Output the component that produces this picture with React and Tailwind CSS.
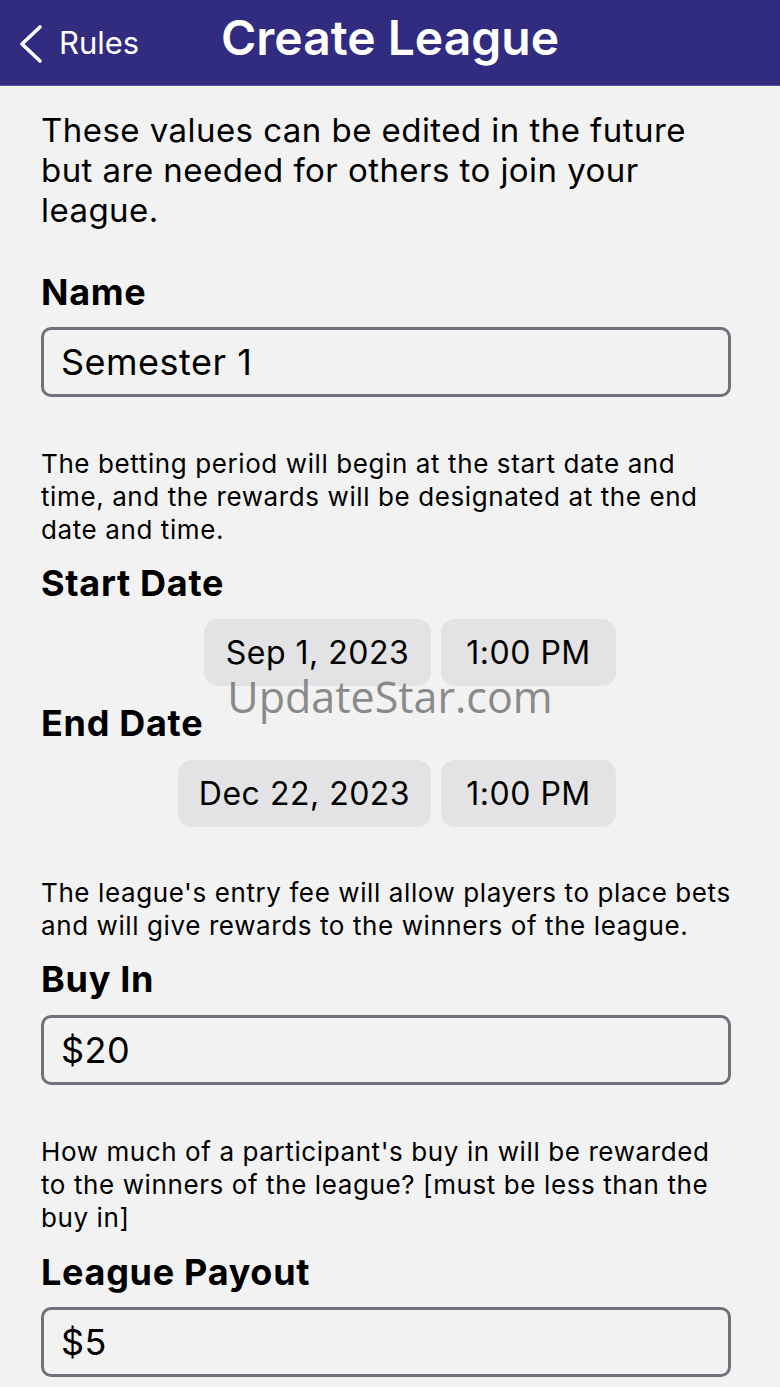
import React from "react";

const font = { fontFamily: "Inter, 'Noto Sans', sans-serif" };

function Heading({ children, className = "" }) {
  return (
    <div className={"text-[36px] leading-[40px] font-bold tracking-[0.7px] text-black " + className}>
      {children}
    </div>
  );
}

function Small({ children, className = "" }) {
  return (
    <p className={"text-[26px] leading-[33px] text-black tracking-[0.6px] " + className}>{children}</p>
  );
}

function Field({ value, className = "" }) {
  return (
    <div className={"h-[70px] rounded-[10px] border-[3px] border-[#6f717d] flex items-center px-[17px] text-[36px] text-black tracking-[0.5px] " + className}>
      {value}
    </div>
  );
}

function Pill({ children, className = "" }) {
  return (
    <div className={"h-[67px] rounded-[14px] bg-[#e3e3e5] flex items-center justify-center text-[32px] text-black tracking-[0.5px] " + className}>
      {children}
    </div>
  );
}

export default function App() {
  return (
    <div style={font} className="w-[780px] h-[1387px] bg-[#f2f2f2] overflow-hidden relative">
      <header className="h-[86px] bg-[#312c80] border-b border-[#5a56a0] flex items-center relative">
        <div className="flex items-center pl-[18px] pt-[2px]">
          <svg width="26" height="40" viewBox="0 0 26 40" className="mr-[15px]">
            <path d="M22 3 L4 20 L22 37" fill="none" stroke="white" strokeWidth="3.6" strokeLinecap="round" strokeLinejoin="round" />
          </svg>
          <span className="text-white text-[31px] tracking-[0px]">Rules</span>
        </div>
        <div className="absolute left-0 right-0 top-0 h-[86px] flex items-center justify-center pointer-events-none">
          <span className="text-white text-[48px] font-semibold tracking-[0px] pb-[10px]">Create League</span>
        </div>
      </header>

      <div className="pl-[41px] pr-[49px] pt-[24px]">
        <p className="text-[33px] leading-[40px] text-black tracking-[0.45px]">
          These values can be edited in the future but are needed for others to join your league.
        </p>

        <Heading className="mt-[42px]">Name</Heading>
        <Field value="Semester 1" className="mt-[15px]" />

        <Small className="mt-[50px]">
          The betting period will begin at the start date and time, and the rewards will be designated at the end date and time.
        </Small>

        <Heading className="mt-[17px]">Start Date</Heading>
        <div className="mt-[16px] flex justify-end gap-[10px] pr-[115px]">
          <Pill className="w-[227px]">Sep 1, 2023</Pill>
          <Pill className="w-[175px]">1:00 PM</Pill>
        </div>

        <Heading className="mt-[17px]">End Date</Heading>
        <div className="mt-[17px] flex justify-end gap-[10px] pr-[115px]">
          <Pill className="w-[253px]">Dec 22, 2023</Pill>
          <Pill className="w-[175px]">1:00 PM</Pill>
        </div>

        <Small className="mt-[49px]">
          The league's entry fee will allow players to place bets and will give rewards to the winners of the league.
        </Small>

        <Heading className="mt-[17px]">Buy In</Heading>
        <Field value="$20" className="mt-[16px]" />

        <Small className="mt-[50px]">
          How much of a participant's buy in will be rewarded to the winners of the league? [must be less than the buy in]
        </Small>

        <Heading className="mt-[18px]">League Payout</Heading>
        <Field value="$5" className="mt-[15px]" />
      </div>

      <div
        className="absolute left-0 right-0 top-[670px] flex justify-center pointer-events-none text-[43px] leading-[54px] text-[#7f7f7f] opacity-90"
        style={{ fontFamily: "'Open Sans', 'Noto Sans', sans-serif" }}
      >
        UpdateStar.com
      </div>
    </div>
  );
}
